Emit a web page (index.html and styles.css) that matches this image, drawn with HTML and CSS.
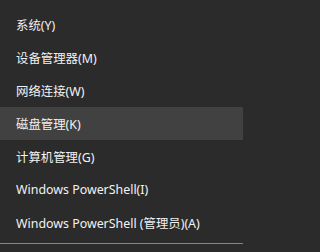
FILE: index.html
```html
<!DOCTYPE html>
<html lang="zh-CN">
<head>
<meta charset="utf-8">
<link rel="stylesheet" href="styles.css">
</head>
<body>
<div class="menu">
  <ul class="list">
    <li class="item">系统(Y)</li>
    <li class="item">设备管理器(M)</li>
    <li class="item">网络连接(W)</li>
    <li class="item active">磁盘管理(K)</li>
    <li class="item">计算机管理(G)</li>
    <li class="item">Windows PowerShell(I)</li>
    <li class="item">Windows PowerShell (管理员)(A)</li>
  </ul>
  <div class="sep"></div>
</div>
</body>
</html>
```
FILE: styles.css
```css
html, body {
  margin: 0;
  padding: 0;
  background: #2b2b2b;
}
.menu {
  width: 243px;
  height: 252px;
  background: #2b2b2b;
  padding-top: 8px;
  box-sizing: border-box;
  overflow: hidden;
}
.list {
  list-style: none;
  margin: 0;
  padding: 0;
}
.item {
  height: 33px;
  display: flex;
  align-items: center;
  padding-left: 16px;
  color: #f2f2f2;
  font-family: "Noto Sans", "Noto Sans CJK SC", sans-serif;
  font-size: 12.4px;
  white-space: nowrap;
}
.item.active {
  background: #414141;
}
.sep {
  height: 1px;
  background: #858585;
  margin-top: 4px;
}
```
